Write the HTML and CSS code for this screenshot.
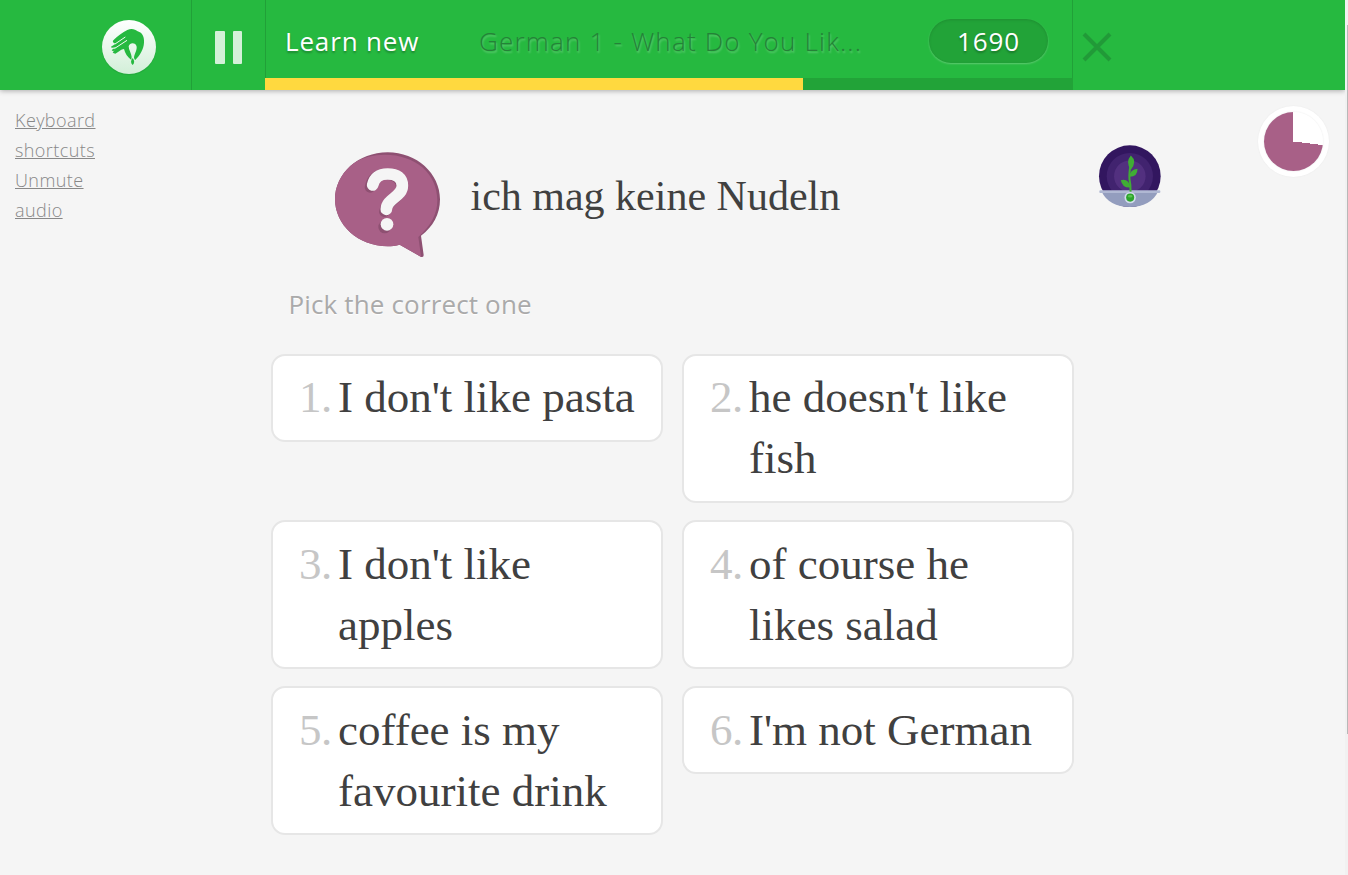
FILE: index.html
```html
<!DOCTYPE html>
<html lang="en">
<head>
<meta charset="utf-8">
<title>Learn new</title>
<link rel="stylesheet" href="styles.css">
</head>
<body>
<div class="page">
  <header class="topbar">
    <div class="brand">
      <svg class="logo" viewBox="33 57 168 174">
        <defs><linearGradient id="disc" x1="0" y1="0" x2="0" y2="1"><stop offset="0" stop-color="#fff"/><stop offset="1" stop-color="#d2efd8"/></linearGradient></defs>
        <circle cx="117" cy="145" r="81" fill="#1a7f2c" opacity=".22"/>
        <circle cx="117" cy="141" r="81" fill="url(#disc)"/>
        <path fill="#26b940" d="M70 121C82 108 98 97 112 90C123 84 136 87 143 94C158 98 163 112 162 128C161 148 149 167 136 180Q133 178 132 173C133 161 141 152 140 140C138 127 119 126 116 139C116 151 124 159 125 171L124 180C112 171 105 160 102 147C94 147 86 156 76 161Q68 160 68 156L83 146Q68 157 65 150L80 140Q62 146 63 140L77 131Q65 128 70 121Z"/>
        <path d="M75 132L106 111M73 146L111 121" fill="none" stroke="#f3fbf4" stroke-width="3"/>
        <path d="M128 174Q137 186 128 195Q118 186 128 174Z" fill="#26b940"/>
      </svg>
    </div>
    <div class="pause"><span class="bar"></span><span class="bar"></span></div>
    <div class="session">
      <div class="session-info">
        <span class="mode">Learn new</span>
        <span class="course">German 1 - What Do You Lik...</span>
        <span class="score">1690</span>
      </div>
      <div class="progress"><div class="progress-fill"></div></div>
    </div>
    <div class="close">
      <svg viewBox="0 0 30 30" width="30" height="30"><path d="M2 2L28 28M28 2L2 28" stroke="#219a38" stroke-width="4"/></svg>
    </div>
  </header>
  <div class="body">
    <nav class="side"><a>Keyboard shortcuts</a><a>Unmute audio</a></nav>
    <main class="main">
      <div class="question">
        <svg class="bubble" viewBox="0 0 318 318">
          <defs><clipPath id="shape"><path id="b" d="M158 1C245 1 315 65 315 142C315 187 294 225 258 251L266 309Q266 318 257 314L194 278C182 282 170 283 158 283C70 283 0 219 0 142C0 65 70 1 158 1Z"/></clipPath></defs>
          <use href="#b" fill="#8e5072"/>
          <g clip-path="url(#shape)"><path fill="#a86087" d="M149 8C242 8 307 65 307 145C307 187 287 222 250 255L259 320L194 285Q175 290 158 290C60 290 -10 230 -10 145C-10 65 61 8 149 8Z"/></g>
          <path d="M105 106C112 71 132 67 153 67C181 67 199 80 199 106C199 140 151 149 148 179" fill="none" stroke="#8e5072" stroke-width="32" stroke-linecap="round"/>
          <circle cx="149" cy="225" r="19" fill="#8e5072"/>
          <path d="M113 99C119 73 135 66 158 66C186 66 202 78 202 101C202 135 155 139 154 172" fill="none" stroke="#f5f5f5" stroke-width="35" stroke-linecap="round"/>
          <circle cx="156" cy="217" r="19" fill="#f5f5f5"/>
        </svg>
        <h1 class="prompt">ich mag keine Nudeln</h1>
      </div>
      <p class="instruction">Pick the correct one</p>
      <div class="choices">
        <div class="choice"><span class="num">1.</span><span class="answer">I don't like pasta</span></div>
        <div class="choice"><span class="num">2.</span><span class="answer">he doesn't like fish</span></div>
        <div class="choice"><span class="num">3.</span><span class="answer">I don't like apples</span></div>
        <div class="choice"><span class="num">4.</span><span class="answer">of course he likes salad</span></div>
        <div class="choice"><span class="num">5.</span><span class="answer">coffee is my favourite drink</span></div>
        <div class="choice"><span class="num">6.</span><span class="answer">I'm not German</span></div>
      </div>
    </main>
    <div class="growth">
      <svg viewBox="39 45 188 188" width="63" height="63">
        <circle cx="134" cy="138" r="92" fill="#32165f"/>
        <circle cx="134" cy="138" r="69" fill="#41236f"/>
        <circle cx="134" cy="138" r="47" fill="#52307f"/>
        <path d="M49 182H219C205 213 174 230 134 230S63 213 49 182Z" fill="#939dbe"/>
        <rect x="43" y="180" width="182" height="8" rx="3" fill="#b0b8d3"/>
        <path d="M136 184Q137 165 133 148Q131 130 137 100" fill="none" stroke="#40ad35" stroke-width="6"/>
        <path d="M137 76Q157 93 137 119Q120 96 137 76ZM157 116Q157 141 132 140Q135 118 157 116ZM107 150Q131 144 136 172Q112 174 107 150Z" fill="#40ad35"/>
        <circle cx="135" cy="202" r="17" fill="#d2dceb"/>
        <circle cx="135" cy="202" r="12" fill="#2ca52b"/>
        <ellipse cx="135" cy="198" rx="7" ry="4" fill="#5bc451"/>
      </svg>
    </div>
    <div class="timer"><div class="pie"></div></div>
  </div>
  <div class="scrollbar"><div class="thumb"></div></div>
</div>
</body>
</html>
```
FILE: styles.css
```css
* { box-sizing: border-box; }
body { margin: 0; background: #f5f5f5; overflow: hidden; font-family: "Open Sans", sans-serif; color: #404040; }
.page { position: relative; height: 875px; }
.topbar { display: flex; width: 1345px; height: 90px; background: #26b940; box-shadow: 0 1px 5px rgba(0,0,0,.3); }
.brand { width: 192px; padding: 19px 0 0 101px; border-right: 1px solid #21a038; }
.logo { display: block; width: 56px; height: 58px; }
.pause { width: 73px; display: flex; gap: 8px; padding: 31px 0 0 23px; }
.bar { width: 9.5px; height: 33px; background: #d4f1d9; border-radius: 1px; }
.session { width: 808px; display: flex; flex-direction: column; border: solid #21a038; border-width: 0 1px; }
.session-info { flex: 1; display: flex; align-items: flex-start; padding: 19px 24px 0 19px; font-size: 26px; line-height: 44px; letter-spacing: .85px; white-space: nowrap; }
.mode { width: 194px; color: #fff; text-shadow: 0 2px 2px rgba(0,0,0,.25); }
.course { flex: 1; font-weight: 300; color: #258138; letter-spacing: 1.2px; text-shadow: 1px 2px 2px rgba(255,255,255,.25); }
.score { width: 119px; height: 44px; border-radius: 22px; text-align: center; color: #fff; background: #22a338; box-shadow: inset 0 1px 3px rgba(0,0,0,.12), 0 1px 2px rgba(255,255,255,.25); text-shadow: 0 2px 2px rgba(0,0,0,.25); }
.progress { height: 12px; margin: 0 -1px; background: #22a338; }
.progress-fill { width: 538px; height: 12px; background: #ffd93f; }
.close { padding: 32px 0 0 9px; }
.close svg { display: block; }
.body { display: flex; align-items: flex-start; }
.side { width: 100px; margin-right: 171px; padding: 15px 0 0 15px; font-size: 18px; line-height: 30px; font-weight: 300; letter-spacing: .42px; }
.side a { display: block; color: #888; text-decoration: underline; }
.main { width: 803px; }
.question { display: flex; padding: 62px 0 0 64px; height: 184px; }
.bubble { display: block; width: 106px; height: 106px; margin-right: 29.5px; }
.prompt { margin: 14px 0 0; font: 42px/60px "Liberation Serif", serif; white-space: nowrap; }
.instruction { margin: 10px 0 0 17.5px; font-size: 26px; line-height: 40px; letter-spacing: .15px; color: #aaa; text-shadow: 0 1px 1px #fff; }
.choices { display: grid; grid-template-columns: 392px 392px; gap: 17.2px 19px; align-items: start; margin-top: 30px; }
.choice { display: flex; padding: 11.35px 20px 11.65px 26px; background: #fff; border: 2px solid #e6e6e6; border-radius: 14px; font: 45px/61px "Liberation Serif", serif; }
.num { width: 39px; flex: none; color: #c6c6c6; letter-spacing: -.6px; }
.growth { padding: 55px 0 0 24px; width: 183.5px; }
.growth svg { display: block; }
.timer { width: 71px; height: 71px; margin-top: 16px; padding: 6px; border-radius: 50%; background: #fff; box-shadow: 0 0 2px rgba(0,0,0,.05); }
.pie { width: 59px; height: 59px; border-radius: 50%; background: conic-gradient(#fff 0 97deg, #a86087 97deg 360deg); box-shadow: 0 0 2px rgba(0,0,0,.1); }
.scrollbar { position: absolute; top: 0; right: 0; width: 3px; height: 875px; background: #f1f1f1; }
.thumb { width: 1px; height: 709px; margin: 25px 0 0 2px; background: #b8b8b8; }
```
